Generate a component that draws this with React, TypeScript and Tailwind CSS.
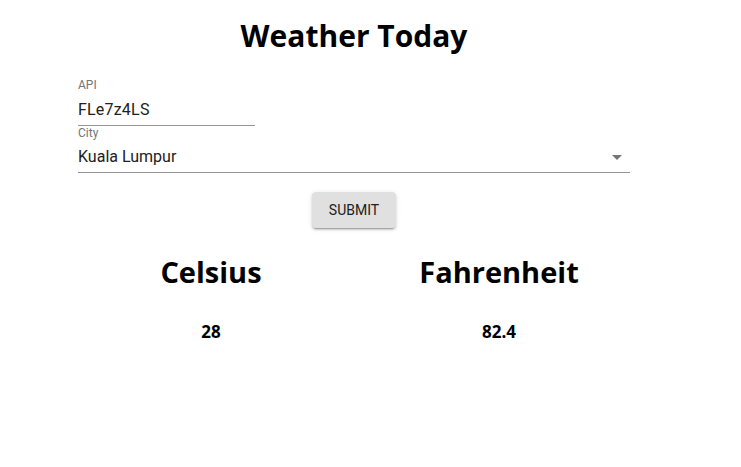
import React from 'react'

const heading = { fontFamily: '"Open Sans", "Noto Sans", sans-serif' }

export default function App() {
  return (
    <div className="w-[741px] h-[467px] bg-white">
      <div className="w-[552px] ml-[78px] flex flex-col">
        <h1 style={heading} className="text-center text-[30px] font-bold text-black mt-[14px] leading-[44px]">
          Weather Today
        </h1>
        <div className="mt-[20px] font-['Roboto',sans-serif]">
          <div className="w-[177px] border-b border-[#949494]">
            <div className="text-[12px] leading-[14px] text-[#757575]">API</div>
            <div className="text-[16px] leading-[24px] pt-[6px] pb-[3px] text-[#212121] tracking-[0.2px]">FLe7z4LS</div>
          </div>
          <div className="border-b border-[#949494]">
            <div className="text-[12px] leading-[14px] text-[#757575]">City</div>
            <div className="flex items-center justify-between pt-[5px] pb-[3px]">
              <span className="text-[16px] leading-[24px] text-[#212121]">Kuala Lumpur</span>
              <svg width="24" height="24" viewBox="0 0 24 24" className="mr-[1px]">
                <path d="M7 10l5 5 5-5z" fill="#757575" />
              </svg>
            </div>
          </div>
          <div className="flex justify-center mt-[19px]">
            <button className="w-[84px] h-[36px] rounded-[4px] bg-[#e0e0e0] text-[14px] text-[#212121] uppercase shadow-[0_3px_1px_-2px_rgba(0,0,0,0.2),0_2px_2px_0_rgba(0,0,0,0.14),0_1px_5px_0_rgba(0,0,0,0.12)]">
              Submit
            </button>
          </div>
        </div>
        <div style={heading} className="flex mt-[22px] -ml-[11px]">
          <div className="w-[288px] shrink-0 flex flex-col items-center">
            <h2 className="text-[29px] font-bold leading-[44px] text-black">Celsius</h2>
            <div className="text-[17px] font-bold mt-[25px] text-black">28</div>
          </div>
          <div className="w-[288px] shrink-0 flex flex-col items-center">
            <h2 className="text-[29px] font-bold leading-[44px] text-black">Fahrenheit</h2>
            <div className="text-[17px] font-bold mt-[25px] text-black">82.4</div>
          </div>
        </div>
      </div>
    </div>
  )
}
